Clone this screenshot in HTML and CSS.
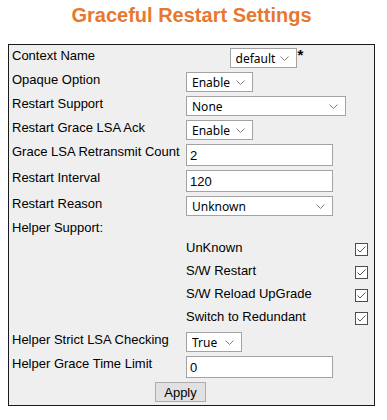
FILE: index.html
```html
<!DOCTYPE html>
<html lang="en">
<head>
  <meta charset="UTF-8" />
  <title>Graceful Restart Settings</title>
  <link rel="stylesheet" href="styles.css">
</head>
<body>
  <div class="page">
    <h1 class="title">Graceful Restart Settings</h1>
    <form class="panel" id="grForm">
      <table class="form">
        <tr>
          <td class="lbl w-lbl">Context Name</td>
          <td class="val ctx w-val">
            <select class="sel w-67"><option>default</option></select><span class="req">*</span>
          </td>
          <td class="chk w-chk"></td>
        </tr>
        <tr>
          <td class="lbl">Opaque Option</td>
          <td class="val"><select class="sel w-67"><option>Enable</option><option>Disable</option></select></td>
          <td></td>
        </tr>
        <tr>
          <td class="lbl">Restart Support</td>
          <td class="val"><select class="sel w-160"><option>None</option><option>Planned Only</option><option>Planned and Unplanned</option></select></td>
          <td></td>
        </tr>
        <tr>
          <td class="lbl">Restart Grace LSA Ack</td>
          <td class="val"><select class="sel w-67"><option>Enable</option><option>Disable</option></select></td>
          <td></td>
        </tr>
        <tr>
          <td class="lbl">Grace LSA Retransmit Count</td>
          <td class="val"><input type="text" class="txt" value="2" /></td>
          <td></td>
        </tr>
        <tr>
          <td class="lbl">Restart Interval</td>
          <td class="val"><input type="text" class="txt" value="120" /></td>
          <td></td>
        </tr>
        <tr>
          <td class="lbl">Restart Reason</td>
          <td class="val"><select class="sel w-147"><option>Unknown</option><option>Software Restart</option></select></td>
          <td></td>
        </tr>
        <tr>
          <td class="lbl">Helper Support:</td>
          <td></td>
          <td></td>
        </tr>
        <tr>
          <td></td>
          <td class="lbl">UnKnown</td>
          <td class="chk"><input type="checkbox" class="cb" checked /></td>
        </tr>
        <tr>
          <td></td>
          <td class="lbl">S/W Restart</td>
          <td class="chk"><input type="checkbox" class="cb" checked /></td>
        </tr>
        <tr>
          <td></td>
          <td class="lbl">S/W Reload UpGrade</td>
          <td class="chk"><input type="checkbox" class="cb" checked /></td>
        </tr>
        <tr>
          <td></td>
          <td class="lbl">Switch to Redundant</td>
          <td class="chk"><input type="checkbox" class="cb" checked /></td>
        </tr>
        <tr>
          <td class="lbl">Helper Strict LSA Checking</td>
          <td class="val"><select class="sel w-56"><option>True</option><option>False</option></select></td>
          <td></td>
        </tr>
        <tr>
          <td class="lbl">Helper Grace Time Limit</td>
          <td class="val"><input type="text" class="txt" value="0" /></td>
          <td></td>
        </tr>
        <tr>
          <td class="actions" colspan="3"><button type="submit" class="btn">Apply</button></td>
        </tr>
      </table>
    </form>
  </div>
</body>
</html>
```

FILE: styles.css
```css
body {
  margin: 0;
  background: #fff;
  font-family: "Liberation Sans", Arial, sans-serif;
  font-size: 13px;
  color: #000;
}
.page {
  width: 367px;
  margin-left: 8px;
}
.title {
  margin: 4px 0 17px;
  font-size: 20px;
  line-height: 23px;
  font-weight: bold;
  text-align: center;
  color: #e8782f;
}
.panel {
  margin: 0;
  border: 1px solid #1a1a1a;
  background: #efefef;
}
.form {
  width: 100%;
  border-spacing: 2px;
}
.form td {
  padding: 1px;
  vertical-align: top;
}
.w-lbl { width: 170px; }
.w-val { width: 161px; }
.w-chk { width: 20px; }
.lbl {
  line-height: 16px;
  white-space: nowrap;
}
.ctx {
  text-align: center;
}
.req {
  display: inline-block;
  margin-left: 1px;
  font-size: 15px;
  font-weight: bold;
  line-height: 14px;
  vertical-align: top;
}
.sel {
  appearance: none;
  -webkit-appearance: none;
  box-sizing: border-box;
  height: 20px;
  margin: 0;
  padding: 0 18px 0 5px;
  border: 1px solid #a3a3a3;
  border-radius: 0;
  background: #fff url("data:image/svg+xml;utf8,<svg xmlns='http://www.w3.org/2000/svg' width='9' height='5'><polyline points='0.5,0.5 4.5,4.5 8.5,0.5' fill='none' stroke='%23808080' stroke-width='1'/></svg>") no-repeat right 7px center;
  font-family: "Noto Sans", sans-serif;
  font-size: 12px;
  color: #000;
  vertical-align: top;
}
.w-67 { width: 67px; }
.w-56 { width: 56px; }
.w-147 { width: 147px; }
.w-160 { width: 160px; }
.txt {
  box-sizing: border-box;
  width: 147px;
  height: 22px;
  margin: 0;
  padding: 0 3px;
  border: 1px solid #a3a3a3;
  background: #fff;
  font-family: "Liberation Sans", Arial, sans-serif;
  font-size: 13px;
  vertical-align: top;
}
.chk {
  text-align: center;
}
.cb {
  appearance: none;
  -webkit-appearance: none;
  width: 13px;
  height: 13px;
  margin: 3px 3px 3px 4px;
  border: 1px solid #4d4d4d;
  background: #fff url("data:image/svg+xml;utf8,<svg xmlns='http://www.w3.org/2000/svg' width='11' height='11'><polyline points='1.5,5.5 4,8 9.5,2.5' fill='none' stroke='%23555' stroke-width='1'/></svg>") no-repeat center;
  vertical-align: top;
}
.actions {
  text-align: center;
  padding-right: 23px !important;
}
.btn {
  box-sizing: border-box;
  width: 51px;
  height: 20px;
  margin: 0;
  padding: 0;
  border: 1px solid #adadad;
  background: #e1e1e1;
  font-family: "Liberation Sans", Arial, sans-serif;
  font-size: 13px;
  color: #000;
}
```
